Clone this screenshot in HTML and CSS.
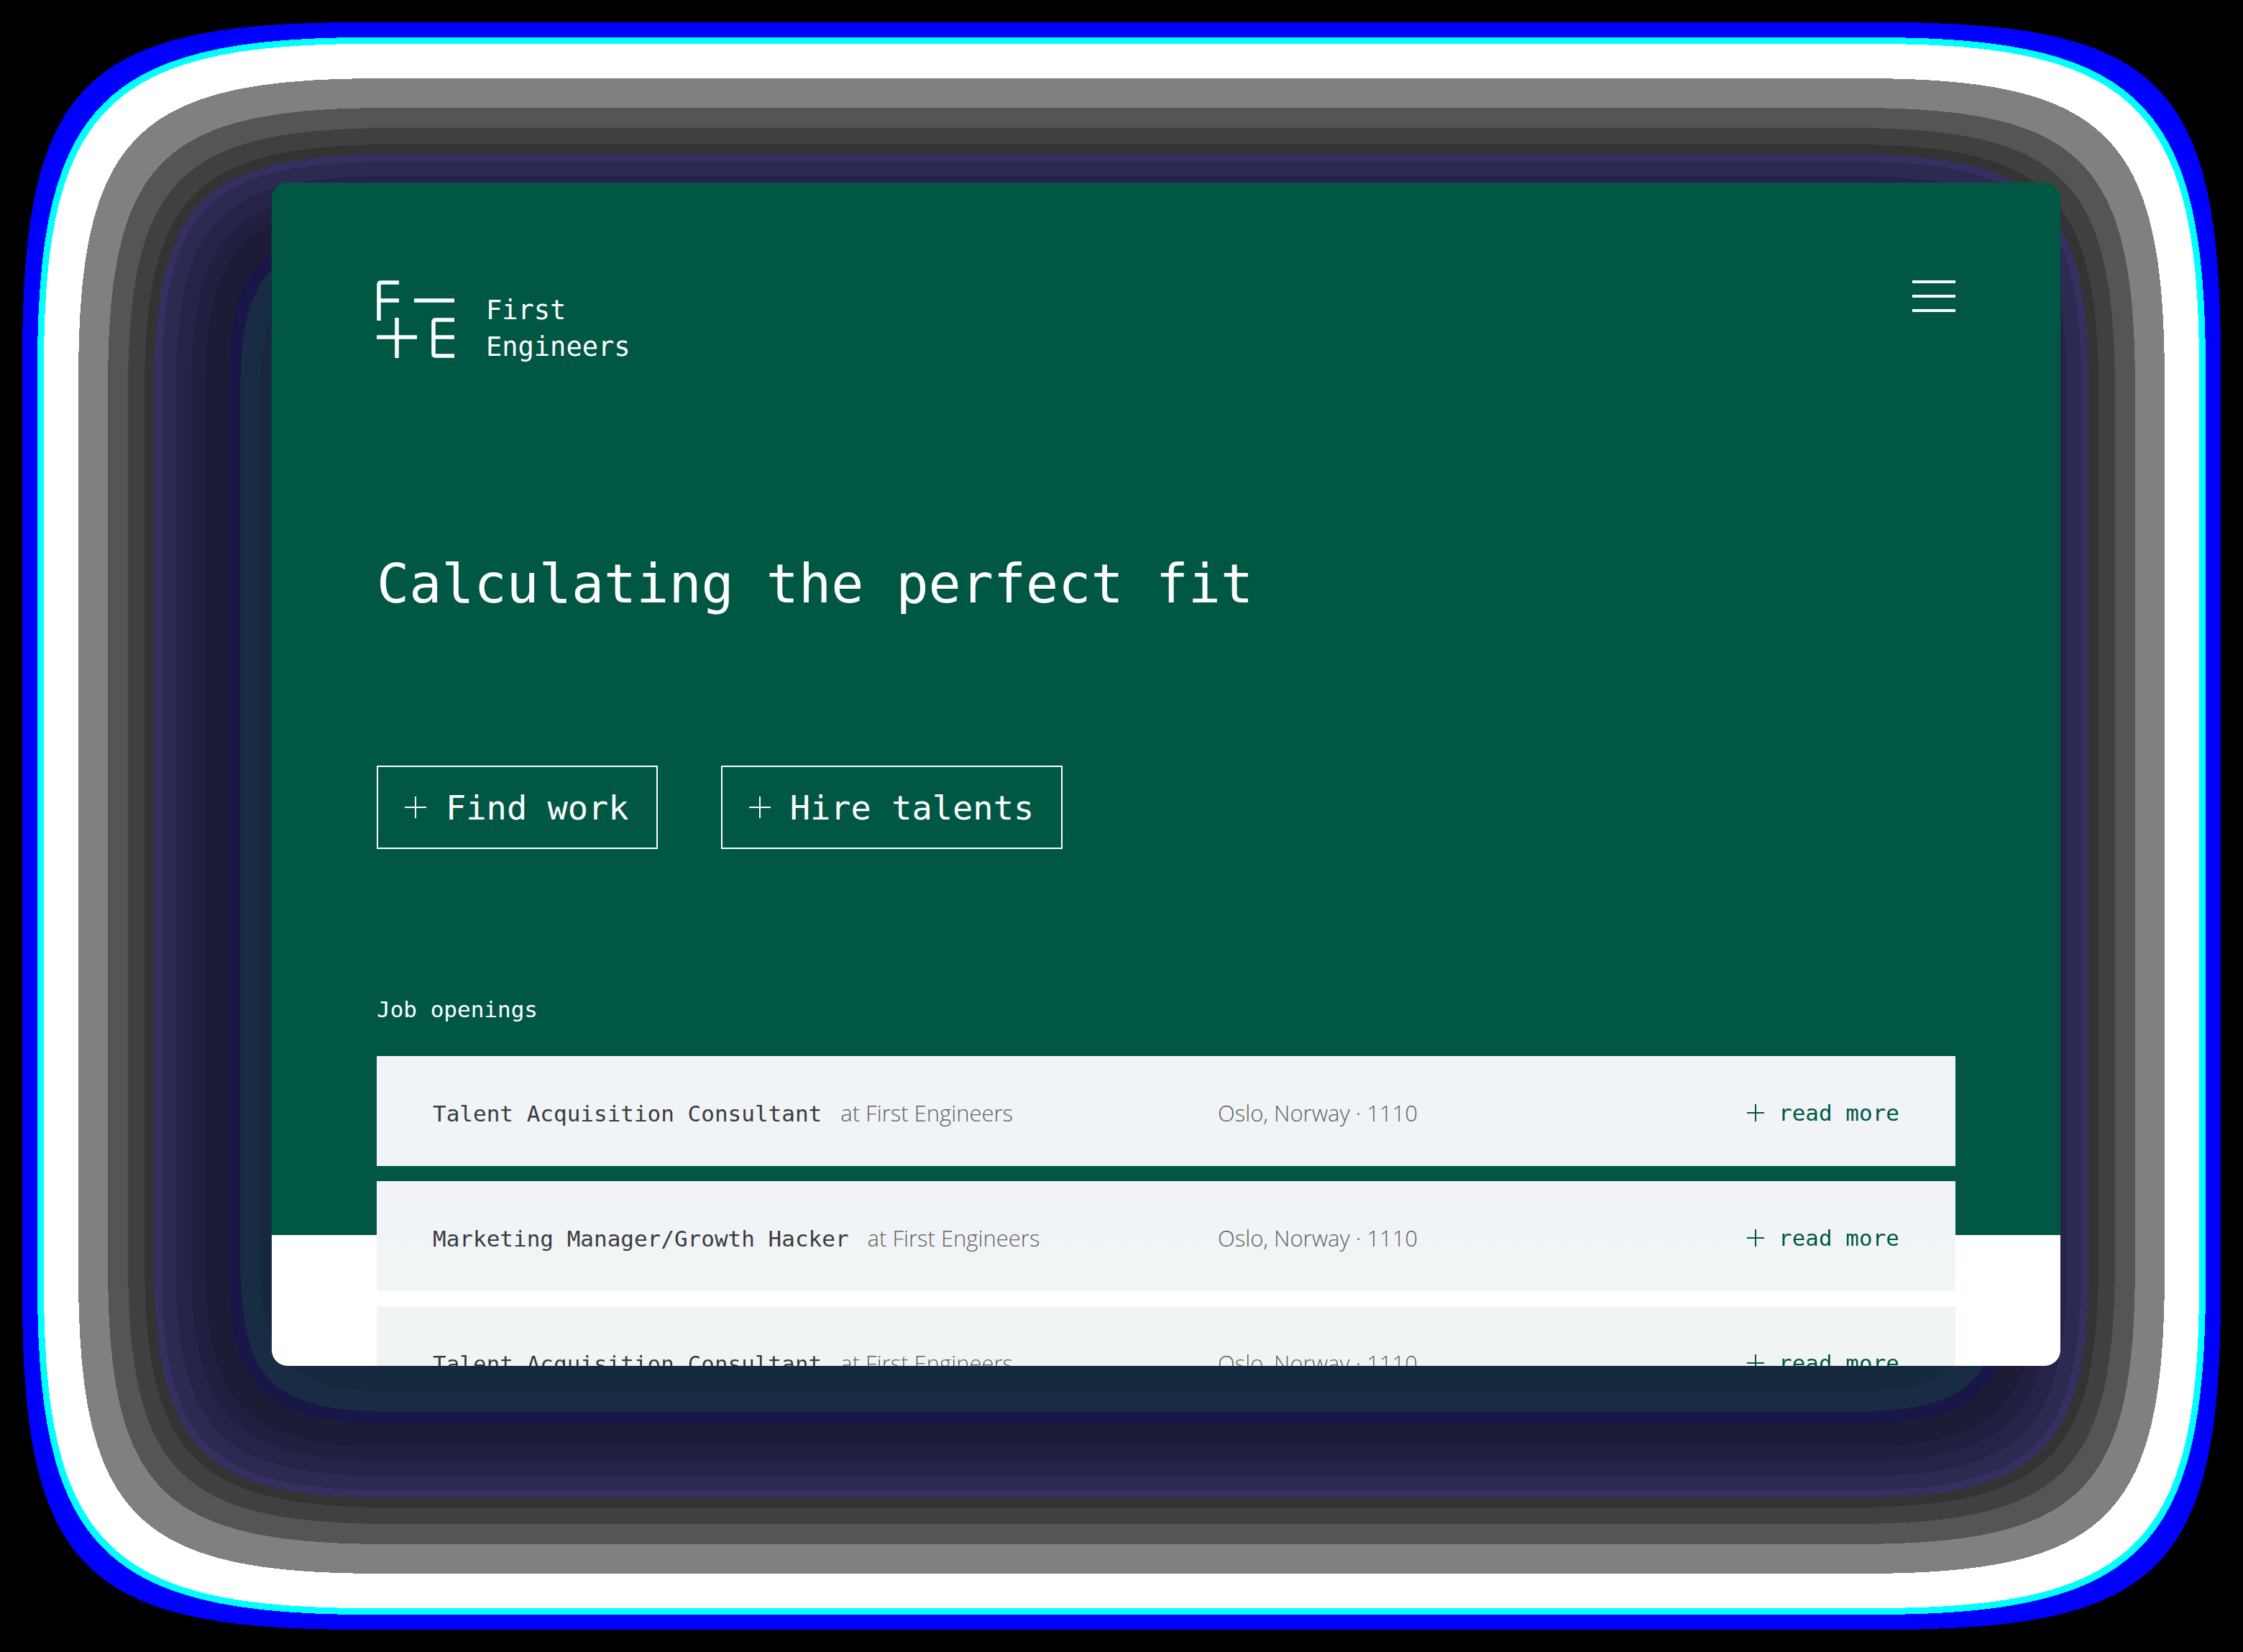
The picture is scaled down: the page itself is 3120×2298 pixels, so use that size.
FILE: index.html
```
<!DOCTYPE html>
<html lang="en">
<head>
<meta charset="utf-8">
<meta name="viewport" content="width=device-width, initial-scale=1">
<title>First Engineers</title>
<link rel="stylesheet" href="styles.css">
</head>
<body>
<svg class="backdrop" id="backdrop" viewBox="0 0 3120 2298" preserveAspectRatio="none" aria-hidden="true"></svg>
<div class="stage">
  <main class="card">
    <header class="header">
      <a class="brand" href="#">
        <svg class="brand-mark" viewBox="0 0 108 108" aria-hidden="true">
          <path d="M31 3H6Q3 3 3 6V56M3 28H31M52 28H108M0 79H56M28 52V108M108 55H82Q79 55 79 58V102Q79 105 82 105H108M79 79H108"/>
        </svg>
        <span class="brand-name">First<br>Engineers</span>
      </a>
      <button class="menu" type="button" aria-label="Menu">
        <svg viewBox="0 0 60 44" aria-hidden="true"><path d="M0 2H60M0 22H60M0 42H60"/></svg>
      </button>
    </header>

    <h1 class="title">Calculating the perfect fit</h1>

    <div class="actions">
      <button class="action" type="button"><svg class="plus" viewBox="0 0 30 30" aria-hidden="true"><path d="M0 15H30M15 0V30"/></svg>Find work</button>
      <button class="action" type="button"><svg class="plus" viewBox="0 0 30 30" aria-hidden="true"><path d="M0 15H30M15 0V30"/></svg>Hire talents</button>
    </div>

    <h2 class="subtitle">Job openings</h2>
    <ul class="jobs">
      <li class="job">
        <div class="job-name"><h3 class="job-title">Talent Acquisition Consultant</h3><span class="note">at First Engineers</span></div>
        <span class="note">Oslo, Norway · 1110</span>
        <a class="more" href="#"><svg class="plus-small" viewBox="0 0 24 24" aria-hidden="true"><path d="M0 12H24M12 0V24"/></svg>read more</a>
      </li>
      <li class="job job-fade">
        <div class="job-name"><h3 class="job-title">Marketing Manager/Growth Hacker</h3><span class="note">at First Engineers</span></div>
        <span class="note">Oslo, Norway · 1110</span>
        <a class="more" href="#"><svg class="plus-small" viewBox="0 0 24 24" aria-hidden="true"><path d="M0 12H24M12 0V24"/></svg>read more</a>
      </li>
      <li class="job job-last">
        <div class="job-name"><h3 class="job-title">Talent Acquisition Consultant</h3><span class="note">at First Engineers</span></div>
        <span class="note">Oslo, Norway · 1110</span>
        <a class="more" href="#"><svg class="plus-small" viewBox="0 0 24 24" aria-hidden="true"><path d="M0 12H24M12 0V24"/></svg>read more</a>
      </li>
    </ul>
  </main>
</div>
<script src="backdrop.js"></script>
</body>
</html>
```
FILE: styles.css
```
* { box-sizing: border-box; }

body {
  margin: 0;
  background: #000;
  color: #fff;
  font-family: "DejaVu Sans Mono", "Liberation Mono", monospace;
}

h1, h2, h3, ul { margin: 0; padding: 0; font-weight: 400; }

button { font: inherit; color: inherit; background: none; cursor: pointer; }

a { color: inherit; text-decoration: none; }

svg { display: block; flex: none; fill: none; stroke: currentColor; }

/* banded glow behind the card */
.backdrop {
  position: fixed;
  inset: 0;
  z-index: -1;
  width: 100%;
  height: 100%;
  stroke: none;
  shape-rendering: crispEdges;
}

.stage {
  display: grid;
  grid-template-rows: minmax(0, 1fr);
  height: 100vh;
  padding: 254px 254px 398px 378px;
}

.card {
  overflow: hidden;
  padding: 136px 146px 0;
  border-radius: 22px;
  background: linear-gradient(#005844 1464px, #fff 1464px);
}

.header {
  display: flex;
  justify-content: space-between;
  align-items: flex-start;
}

.brand {
  display: flex;
  align-items: flex-start;
  gap: 44px;
}

.brand-mark { width: 108px; height: 108px; stroke-width: 5.5; }

.brand-name {
  padding-top: 16px;
  font-size: 37px;
  line-height: 51px;
}

.menu { padding: 0; border: 0; }
.menu svg { width: 60px; height: 44px; stroke-width: 4; }

.title {
  margin-top: 256px;
  font-size: 75px;
  line-height: 96px;
}

.actions {
  display: flex;
  gap: 88px;
  margin-top: 205px;
}

.action {
  display: flex;
  align-items: center;
  gap: 27px;
  height: 116px;
  padding: 0 38px 0 37px;
  border: 2px solid #fff;
  font-size: 47px;
}

.plus { width: 30px; height: 30px; stroke-width: 2; }

.subtitle {
  margin-top: 203px;
  font-size: 31px;
  line-height: 40px;
}

.jobs {
  display: grid;
  gap: 21px;
  margin-top: 45px;
  list-style: none;
}

.job {
  display: grid;
  grid-template-columns: 1092fr 736fr auto;
  align-items: baseline;
  padding: 59px 78px 53px;
  background: #f0f4f7;
  color: #3a3d3e;
  line-height: 40px;
}

.job-fade { background: linear-gradient(#f1f3f7, #f0f5f5); }
.job-last { background: #f0f4f3; }

.job-name { display: flex; align-items: baseline; gap: 26px; }

.job-title { font-size: 31px; }

.note {
  color: #5f6364;
  font-family: "Open Sans", "Noto Sans", sans-serif;
  font-size: 31px;
  font-weight: 300;
}

.more {
  display: flex;
  align-items: center;
  gap: 20px;
  color: #005844;
  font-size: 31px;
}

.plus-small { width: 24px; height: 24px; stroke-width: 2; }
```
FILE: backdrop.js
```
// Each band: inset from the window edge, corner reach, corner tension, colour.
const bands = [
  [31, 469, 84, "#0000ff"],
  [52, 460, 92, "#00ffff"],
  [61, 450, 90, "#ffffff"],
  [109, 420, 79, "#808080"],
  [150, 390, 73, "#555555"],
  [178, 370, 71, "#404040"],
  [201, 345, 70, "#333333"],
  [215, 320, 69, "#353062"],
  [225, 310, 66, "#2c2952"],
  [245, 295, 62, "#262348"],
  [266, 280, 58, "#211f40"],
  [285, 265, 54, "#1d1c36"],
  [317, 235, 46, "#191748"],
  [334, 220, 41, "#182c44"],
  [361, 205, 38, "#15283e"]
];
const svg = document.getElementById("backdrop");
for (const [n, r, q, fill] of bands) {
  const h = 3120 - 2 * (n + r);
  const v = 2298 - 2 * (n + r);
  const p = r - q;
  const path = document.createElementNS("http://www.w3.org/2000/svg", "path");
  path.setAttribute("d",
    `M${n + r} ${n}h${h}c${p} 0 ${r} ${q} ${r} ${r}` +
    `v${v}c0 ${p} ${-q} ${r} ${-r} ${r}` +
    `h${-h}c${-p} 0 ${-r} ${-q} ${-r} ${-r}` +
    `v${-v}c0 ${-p} ${q} ${-r} ${r} ${-r}z`);
  path.setAttribute("fill", fill);
  svg.append(path);
}
```
